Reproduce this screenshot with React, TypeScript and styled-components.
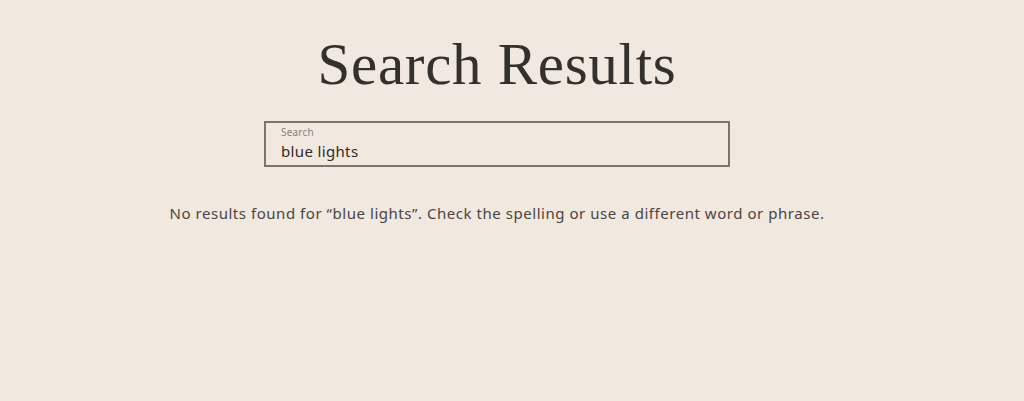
import styled, { createGlobalStyle } from 'styled-components'

const GlobalStyle = createGlobalStyle`
  html, body {
    margin: 0;
    padding: 0;
    background: #f1e8df;
  }
  body {
    font-family: 'Noto Sans', 'Liberation Sans', sans-serif;
    color: #3f3b37;
  }
`

export default function App() {
  const query = 'blue lights'
  return (
    <>
      <GlobalStyle />
      <Page>
        <Title>Search Results</Title>
        <SearchField>
          <Label htmlFor="search">Search</Label>
          <Input id="search" type="search" defaultValue={query} />
        </SearchField>
        <Message>
          No results found for “{query}”. Check the spelling or use a different
          word or phrase.
        </Message>
      </Page>
    </>
  )
}

const Page = styled.main`
  display: flex;
  flex-direction: column;
  align-items: center;
  min-height: 401px;
  box-sizing: border-box;
  padding: 28px 30px 0 0;
`

const Title = styled.h1`
  margin: 0;
  font-family: 'Liberation Serif', 'DejaVu Serif', serif;
  font-weight: 400;
  font-size: 59px;
  line-height: 72px;
  letter-spacing: 0.7px;
  color: #34302c;
`

const SearchField = styled.div`
  display: flex;
  flex-direction: column;
  width: 466px;
  height: 46px;
  margin-top: 21px;
  box-sizing: border-box;
  padding: 3px 14px 0 15px;
  border: 2px solid #7c746d;
`

const Label = styled.label`
  font-size: 10px;
  line-height: 12px;
  color: #8a837c;
  letter-spacing: 0.2px;
`

const Input = styled.input`
  margin: 3px 0 0;
  padding: 0;
  border: none;
  outline: none;
  background: transparent;
  font-family: 'Noto Sans', 'Liberation Sans', sans-serif;
  font-size: 15px;
  line-height: 20px;
  letter-spacing: 0.35px;
  color: #2f2b28;
  &::-webkit-search-cancel-button {
    display: none;
  }
`

const Message = styled.p`
  margin: 36px 0 0;
  font-size: 15px;
  line-height: 20px;
  letter-spacing: 0.54px;
  color: #4a4540;
`
